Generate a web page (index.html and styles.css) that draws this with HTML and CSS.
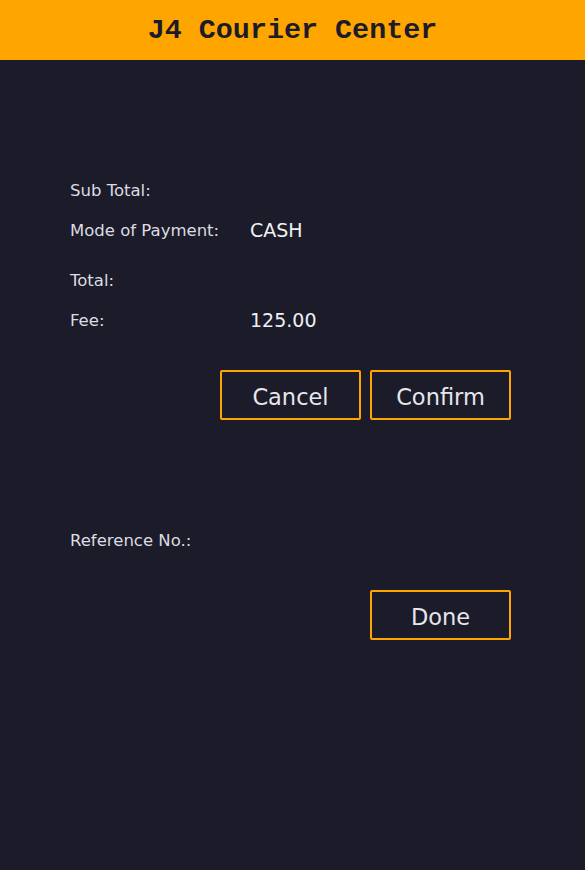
FILE: index.html
```html
<!DOCTYPE html>
<html>
<head>
<meta charset="utf-8">
<link rel="stylesheet" href="styles.css">
</head>
<body>
<header class="topbar">
  <h1 class="title">J4 Courier Center</h1>
</header>
<main class="content">
  <section class="summary">
    <div class="row"><span class="label">Sub Total:</span><span class="value"></span></div>
    <div class="row"><span class="label">Mode of Payment:</span><span class="value">CASH</span></div>
    <div class="row row-gap"><span class="label">Total:</span><span class="value"></span></div>
    <div class="row"><span class="label">Fee:</span><span class="value">125.00</span></div>
    <div class="actions">
      <button class="btn">Cancel</button>
      <button class="btn">Confirm</button>
    </div>
  </section>
  <section class="result">
    <div class="row"><span class="label">Reference No.:</span><span class="value"></span></div>
    <div class="actions actions-done">
      <button class="btn">Done</button>
    </div>
  </section>
</main>
</body>
</html>
```
FILE: styles.css
```css
html, body {
  margin: 0;
  padding: 0;
  background: #1b1b29;
  height: 100%;
}
body {
  font-family: "DejaVu Sans", Verdana, sans-serif;
  color: #e6e6ec;
}
.topbar {
  height: 60px;
  background: #ffa500;
  display: flex;
  align-items: center;
  justify-content: center;
}
.title {
  margin: 0;
  font-family: "Liberation Mono", "Courier New", monospace;
  font-weight: bold;
  font-size: 28.4px;
  color: #1b1b29;
}
.content {
  padding: 110px 74px 0 70px;
}
.row {
  display: flex;
  align-items: center;
  height: 40px;
}
.row-gap {
  margin-top: 10px;
}
.label {
  width: 180px;
  font-size: 16.5px;
  color: #dcdce2;
}
.value {
  font-size: 19px;
  color: #f0f0f4;
}
.actions {
  display: flex;
  justify-content: flex-end;
  gap: 9px;
  margin-top: 30px;
}
.btn {
  width: 141px;
  height: 50px;
  box-sizing: border-box;
  background: transparent;
  border: 2px solid #ffa500;
  border-radius: 2px;
  color: #e6e6ec;
  font-family: "DejaVu Sans", Verdana, sans-serif;
  font-size: 22.5px;
  padding: 3px 0 0;
}
.result {
  margin-top: 100px;
}
.actions-done {
  margin-top: 30px;
}
```
